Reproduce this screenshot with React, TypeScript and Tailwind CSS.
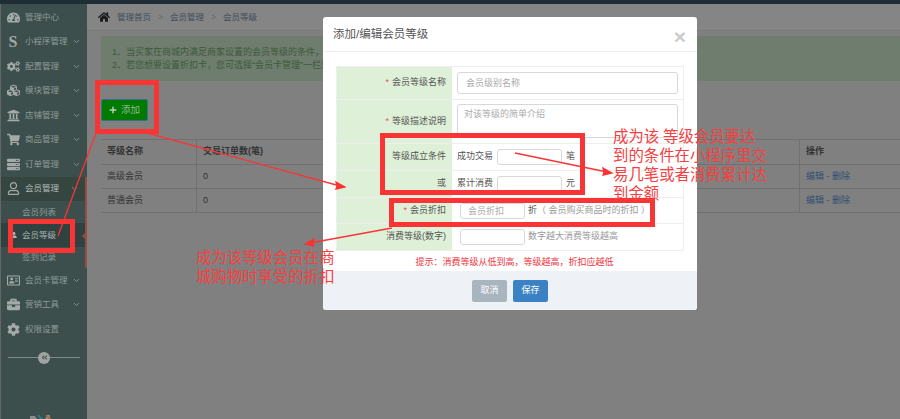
import type { ReactNode } from 'react';
import {
  FaTachometerAlt,
  FaCogs,
  FaCubes,
  FaUniversity,
  FaShoppingCart,
  FaServer,
  FaRegUser,
  FaRegAddressCard,
  FaBriefcase,
  FaCog,
  FaHome,
  FaPlus,
  FaUser,
  FaAngleDoubleLeft,
} from 'react-icons/fa';
import { ChevronDown } from 'lucide-react';

const font = 'font-["Liberation_Sans","Noto_Sans_CJK_SC",sans-serif]';

const menuTop = [
  { label: '管理中心', icon: <FaTachometerAlt />, arrow: false },
  { label: '小程序管理', icon: <span className='font-["Liberation_Serif",serif] font-bold text-[16px]'>S</span>, arrow: true },
  { label: '配置管理', icon: <FaCogs />, arrow: true },
  { label: '模块管理', icon: <FaCubes />, arrow: true },
  { label: '店铺管理', icon: <FaUniversity />, arrow: true },
  { label: '商品管理', icon: <FaShoppingCart />, arrow: true },
  { label: '订单管理', icon: <FaServer />, arrow: true },
];

const menuBottom = [
  { label: '会员卡管理', icon: <FaRegAddressCard />, arrow: true },
  { label: '营销工具', icon: <FaBriefcase />, arrow: true },
  { label: '权限设置', icon: <FaCog />, arrow: false },
];

function MenuItem({ label, icon, arrow, active }: { label: string; icon: ReactNode; arrow: boolean; active?: boolean }) {
  return (
    <div className={`flex items-center h-[24.5px] pl-[3px] pr-[6px] ${active ? 'bg-[#34463f]' : ''}`}>
      <span className="w-[18px] flex justify-center text-[13px] text-[#a3aba8]">{icon}</span>
      <span className={`ml-[3px] flex-1 text-[8.5px] whitespace-nowrap ${active ? 'text-[#b5bcba]' : 'text-[#8f9c99]'}`}>{label}</span>
      {arrow && <ChevronDown className="w-[9px] h-[9px] text-[#98a4a1]" />}
    </div>
  );
}

function Sidebar() {
  return (
    <aside className="relative w-[87px] shrink-0 bg-[#3c4f4c] border-l border-[#666] pt-[1px]">
      {menuTop.map((m) => (
        <MenuItem key={m.label} {...m} />
      ))}
      <div className="relative border-r-2 border-[#9a4a45]">
        <MenuItem label="会员管理" icon={<FaRegUser />} arrow active />
        <div className="text-[8.5px] text-[#8f9c99]">
          <div className="h-[22px] pl-[21px] flex items-center">会员列表</div>
          <div className="h-[24px] pl-[10px] flex items-center bg-[#2f423f] text-[#a9b2b0]">
            <FaUser className="w-[6px] h-[6px] mr-[5px]" />
            会员等级
          </div>
          <div className="h-[21px] pl-[21px] flex items-center">签到记录</div>
        </div>
        <span className="absolute right-0 top-[56px] border-y-[3px] border-r-[3px] border-y-transparent border-r-[#9a4a45]" />
      </div>
      {menuBottom.map((m) => (
        <MenuItem key={m.label} {...m} />
      ))}
      <div className="mt-[10px] mx-[7px] flex items-center">
        <div className="flex-1 h-px bg-[#7d8b88]" />
        <span className="w-[12px] h-[12px] rounded-full bg-[#a0a5a3] flex items-center justify-center">
          <FaAngleDoubleLeft className="w-[7px] h-[7px] text-[#4a5856]" />
        </span>
        <div className="flex-1 h-px bg-[#7d8b88]" />
      </div>
      <svg className="absolute left-[29px] top-[411px]" width="26" height="4" viewBox="0 0 26 4">
        <path d="M0 4V1h5l2 3z" fill="#8c8c8c" />
        <path d="M9 0l4 4h-3L7 0z" fill="#2f7f86" />
        <path d="M15 4l2-4h3v4z" fill="#8c8c8c" />
        <path d="M16 0l6 4h-3l-4-4z" fill="#a8662a" />
      </svg>
    </aside>
  );
}

function Main() {
  const rows = ['高级会员', '普通会员'];
  return (
    <main className="flex-1 min-w-0 text-[9px] text-[#333]">
      <div className="h-[27px] flex items-center pl-[11px] bg-[#858585] border-b border-[#7a7a7a] text-[8.5px] text-[#3d4d5c]">
        <FaHome className="w-[12px] h-[12px] text-[#1c1c1c] mr-[7px]" />
        <span>管理首页</span>
        <span className="mx-[7px] text-[#666]">&gt;</span>
        <span>会员管理</span>
        <span className="mx-[7px] text-[#666]">&gt;</span>
        <span>会员等级</span>
      </div>
      <div className="ml-[14px] mt-[5px] h-[45px] bg-[#6f7d6e] pl-[11px] flex flex-col justify-center gap-[4px] text-[9px] leading-[9px] text-[#3c5a3c] whitespace-nowrap overflow-hidden">
        <div>{'1、当买家在商城内满足商家设置的会员等级的条件\uFF0C系统会自动将其升级为对应等级的会员并享受该等级的折扣权益等相关内容。'}</div>
        <div>{'2、若您想要设置折扣卡\uFF0C您可选择\u201C会员卡管理\u201D一栏进行设置。'}</div>
      </div>
      <button className="ml-[14px] mt-[18px] w-[47px] h-[22px] flex items-center justify-center gap-[4px] rounded-[2px] bg-[#007a00] border border-[#3d6b8a] text-[#8fb88f] text-[9.5px]">
        <FaPlus className="w-[8px] h-[8px] text-[#b5ccb5]" />
        添加
      </button>
      <div className="ml-[14px] mt-[18px] border-t border-b border-[#707070]">
        <div className="grid grid-cols-[96px_1fr_101px] h-[24px] items-center font-bold">
          <div className="pl-[6px] h-full flex items-center border-r border-[#707070]">等级名称</div>
          <div className="pl-[6px]">交易订单数(笔)</div>
          <div className="pl-[6px] h-full flex items-center border-l border-[#707070]">操作</div>
        </div>
        {rows.map((r) => (
          <div key={r} className="grid grid-cols-[96px_1fr_101px] h-[24px] items-center border-t border-[#707070]">
            <div className="pl-[6px] h-full flex items-center border-r border-[#707070]">{r}</div>
            <div className="pl-[6px]">0</div>
            <div className="pl-[6px] h-full flex items-center border-l border-[#707070] text-[#2f4f73]">编辑 - 删除</div>
          </div>
        ))}
      </div>
    </main>
  );
}

function FormRow({ label, required, h, children }: { label?: string; required?: boolean; h: string; children: ReactNode }) {
  return (
    <div className={`flex border-b border-[#eee] last:border-b-0 ${h}`}>
      <div className="w-[115px] shrink-0 bg-[#dff0d8] pr-[6px] flex items-center justify-end text-[9px] text-[#555]">
        {required && <span className="text-[#e7505a] mr-[3px]">*</span>}
        {label}
      </div>
      <div className="flex-1 flex items-center px-[5px] text-[9px] text-[#555]">{children}</div>
    </div>
  );
}

const inputCls =
  'border border-[#d5d9dd] rounded-[3px] bg-white text-[9px] outline-none placeholder:text-[#aaa]';

function Modal() {
  return (
    <div className="absolute left-[323px] top-[17px] w-[374px] h-[293px] bg-white rounded-[3px] flex flex-col overflow-hidden">
      <div className="h-[35px] shrink-0 flex items-center justify-between pl-[10px] pr-[11px] pt-[2px] border-b border-[#eee] text-[11.5px] text-[#555]">
        <span>添加/编辑会员等级</span>
        <span className="text-[21px] leading-none mt-[2px] font-bold text-[#cbcbcb] font-['Liberation_Sans',sans-serif]">×</span>
      </div>
      <div className="flex-1 px-[13px] pt-[14px]">
        <div className="border border-[#eee]">
          <FormRow label="会员等级名称" required h="h-[33px]">
            <input className={`${inputCls} w-full h-[22px] pl-[8px]`} placeholder="会员级别名称" />
          </FormRow>
          <FormRow label="等级描述说明" required h="h-[44px]">
            <textarea className={`${inputCls} w-full h-[34px] mt-[4px] self-start px-[6px] py-[3px] resize-none`} placeholder="对该等级的简单介绍" />
          </FormRow>
          <FormRow label="等级成立条件" h="h-[27px]">
            <span className="mr-[4px]">成功交易</span>
            <input className={`${inputCls} w-[65px] h-[16px]`} />
            <span className="ml-[4px]">笔</span>
          </FormRow>
          <FormRow label="或" h="h-[27px]">
            <span className="mr-[4px]">累计消费</span>
            <input className={`${inputCls} w-[65px] h-[16px]`} />
            <span className="ml-[4px]">元</span>
          </FormRow>
          <FormRow label="会员折扣" required h="h-[26px]">
            <input className={`${inputCls} ml-[3px] w-[65px] h-[16px] pl-[7px]`} placeholder="会员折扣" />
            <span className="ml-[3px]">折</span>
            <span className="text-[#999]">{'\uFF08 会员购买商品时的折扣 \uFF09'}</span>
          </FormRow>
          <FormRow label="消费等级(数字)" h="h-[26px]">
            <input className={`${inputCls} ml-[3px] w-[65px] h-[16px]`} />
            <span className="ml-[3px] text-[#999]">数字越大消费等级越高</span>
          </FormRow>
        </div>
        <p className="mt-[6px] pl-[9px] text-center text-[9px] leading-[10px] text-[#f0303a]">
          {'提示\uFF1A消费等级从低到高\uFF0C等级越高\uFF0C折扣应越低'}
        </p>
      </div>
      <div className="h-[39px] shrink-0 bg-[#eef1f5] flex items-center justify-center gap-[6px] text-[9px] text-white">
        <button className="w-[35px] h-[22px] rounded-[2px] bg-[#a8b5bf]">取消</button>
        <button className="w-[35px] h-[22px] rounded-[2px] bg-[#3b82c4]">保存</button>
      </div>
    </div>
  );
}

// red marks drawn over the screenshot
function Annotations() {
  const note = 'absolute text-[15.4px] leading-[19px] text-[#f5403f] font-["Liberation_Serif","Noto_Sans_CJK_SC",serif] whitespace-nowrap';
  return (
    <>
      <div className="absolute left-[95px] top-[80px] w-[64px] h-[54px] border-[5px] border-[#f93434]" />
      <div className="absolute left-[8px] top-[219px] w-[67px] h-[34px] border-[5px] border-[#f93434]" />
      <div className="absolute left-[380px] top-[133px] w-[205px] h-[62px] border-[5px] border-[#f93434]" />
      <div className="absolute left-[389px] top-[198px] w-[266px] h-[29px] border-[5px] border-[#f93434]" />
      <svg className="absolute inset-0" width="900" height="419" viewBox="0 0 900 419">
        <g stroke="#f93434" strokeWidth="1.3" fill="#f93434">
          <line x1="96" y1="133" x2="58" y2="236" />
          <line x1="147" y1="133" x2="340" y2="186" />
          <path d="M345 187l-9-5 1 4-1 3z" />
          <line x1="515" y1="153" x2="607" y2="172" />
          <path d="M612 173l-9-5 1 4-1 3z" />
          <line x1="392" y1="228" x2="310" y2="243" />
          <path d="M305 244l9-5-1 4 1 3z" />
        </g>
      </svg>
      <div className={`${note} left-[613px] top-[127px]`}>
        成为该 等级会员要达
        <br />
        到的条件在小程序里交
        <br />
        易几笔或者消费累计达
        <br />
        到金额
      </div>
      <div className={`${note} left-[196px] top-[248px]`}>
        成为该等级会员在商
        <br />
        城购物时享受的折扣
      </div>
    </>
  );
}

export default function App() {
  return (
    <div className={`relative w-[900px] h-[419px] overflow-hidden bg-[#808080] ${font}`}>
      <div className="h-[4px] bg-[#1f2d36]" />
      <div className="flex h-[415px]">
        <Sidebar />
        <Main />
      </div>
      <Modal />
      <Annotations />
    </div>
  );
}
